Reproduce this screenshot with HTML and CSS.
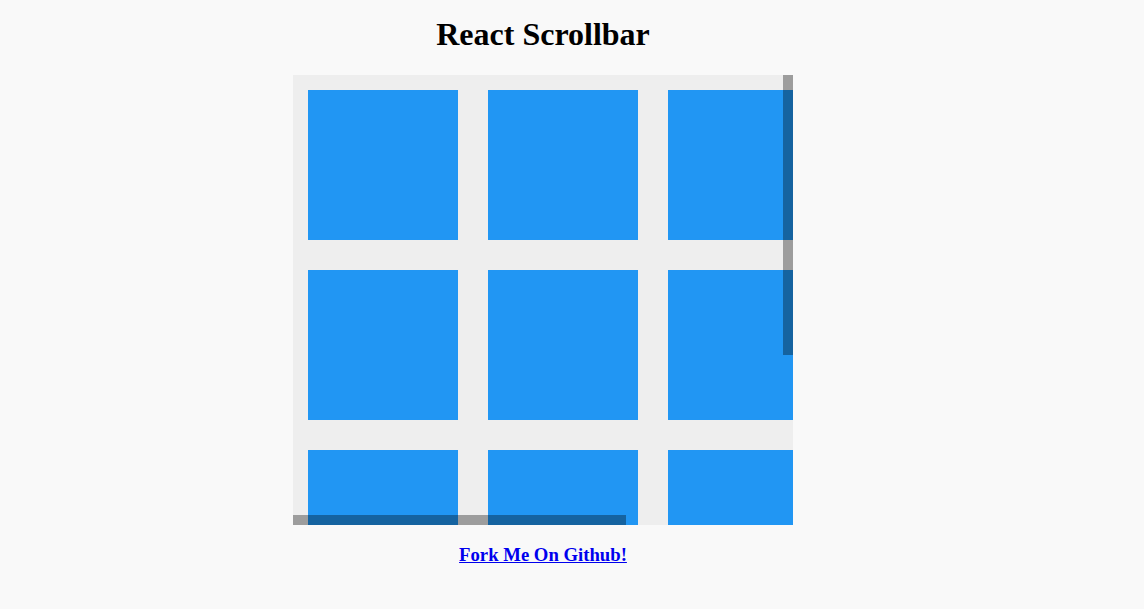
FILE: index.html
```html
<!DOCTYPE html>
<html>
<head>
<meta charset="utf-8">
<link rel="stylesheet" href="styles.css">
</head>
<body>
<div class="app">
  <h1 class="title">React Scrollbar</h1>
  <div class="scroll-area">
    <div class="content">
      <div class="box"></div><div class="box"></div><div class="box"></div><div class="box"></div>
      <div class="box"></div><div class="box"></div><div class="box"></div><div class="box"></div>
      <div class="box"></div><div class="box"></div><div class="box"></div><div class="box"></div>
      <div class="box"></div><div class="box"></div><div class="box"></div><div class="box"></div>
    </div>
    <div class="bar bar-v"></div>
    <div class="bar bar-h"></div>
  </div>
  <h3 class="fork"><a href="#">Fork Me On Github!</a></h3>
</div>
</body>
</html>
```

FILE: styles.css
```css
html, body {
  margin: 0;
  padding: 0;
  background: #f9f9f9;
  font-family: "Liberation Serif", "Times New Roman", serif;
}
.app {
  width: 1086px;
  display: flex;
  flex-direction: column;
  align-items: center;
}
.title {
  margin: 16px 0 22px;
  font-size: 32px;
  line-height: 37px;
  font-weight: bold;
  color: #000;
}
.scroll-area {
  position: relative;
  width: 500px;
  height: 450px;
  background: #eeeeee;
  overflow: hidden;
}
.content {
  width: 720px;
  display: flex;
  flex-wrap: wrap;
}
.box {
  width: 150px;
  height: 150px;
  margin: 15px;
  background: #2196f3;
}
.bar {
  position: absolute;
  background: rgba(0, 0, 0, 0.34);
}
.bar-v {
  right: 0;
  top: 0;
  width: 10px;
  height: 280px;
}
.bar-h {
  left: 0;
  bottom: 0;
  height: 10px;
  width: 333px;
}
.fork {
  margin: 19px 0;
  font-size: 18.72px;
  font-weight: bold;
}
.fork a {
  color: #0000ee;
  text-decoration: underline;
}
```
